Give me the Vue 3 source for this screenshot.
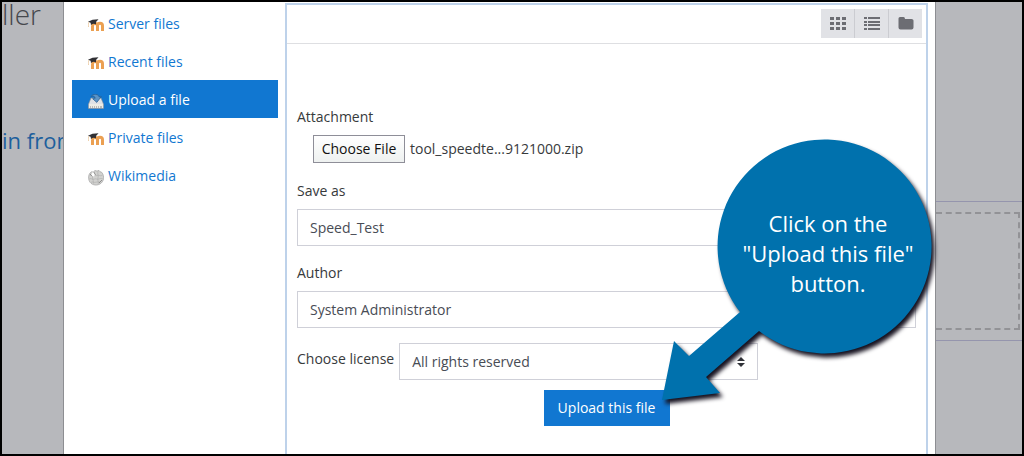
<script setup>
import { ref } from 'vue'

const repositories = [
  { name: 'Server files', icon: 'moodle' },
  { name: 'Recent files', icon: 'moodle' },
  { name: 'Upload a file', icon: 'upload', active: true },
  { name: 'Private files', icon: 'moodle' },
  { name: 'Wikimedia', icon: 'globe' }
]
const saveAs = ref('Speed_Test')
const author = ref('System Administrator')
const license = ref('all')
</script>

<template>
  <div class="screen">
    <div class="backdrop backdrop-left" aria-hidden="true">
      <div class="page-title"><span>ller</span></div>
      <div class="page-link"><span>in from</span></div>
    </div>

    <main class="dialog">
      <nav class="repos">
        <a v-for="r in repositories" :key="r.name" href="#" class="repo" :class="{ active: r.active }">
          <svg v-if="r.icon === 'moodle'" class="repo-icon" viewBox="0 0 16 16">
            <path d="M4.500 13V7.500M9.500 13V7.700c0-3-4.700-3-5-.2M9.500 13V7.700c0-3.200 5-3.200 5 0V13" fill="none" stroke="#eba052" stroke-width="3" />
            <path d="M0 3.700 4.500 1.700 10.500 1.300 8 4v2.500C6.200 5.500 4.600 5.700 3 7L2.600 4.700z" fill="#303034" />
            <path d="M.8 4.300C.2 6 0 7.500.4 9" fill="none" stroke="#e5b981" stroke-width=".8" />
          </svg>
          <svg v-else-if="r.icon === 'upload'" class="repo-icon" viewBox="0 0 16 16">
            <path d="M3 4h10l2.500 6v4.500H.5V10z" fill="#dfe2e6" stroke="#858c94" stroke-width=".6" />
            <path d="M.9 10h14.200v4H.9z" fill="#ecece6" />
            <path d="M2 13h1m1 0h1m1 0h1m1 0h1m1 0h1m1 0h2" stroke="#888" stroke-width="1" />
            <path d="M3 2.500C5-.6 10.300-.3 11.300 3l2-.4-4.500 5.800-4.200-3.700 2.600-.4C6.900 2.300 5.300 1.500 3 2.500z" fill="#5c94c6" stroke="#245a8d" stroke-width=".7" />
          </svg>
          <svg v-else class="repo-icon" viewBox="0 0 16 16">
            <path d="M2 3 4 1.500l1 .8L7 .5l2 .6 2-.7 1 1.300 1.700.6c3.200 4 2.300 9.300-1.800 11.700-4 2.200-9 .8-10.700-3.200C.1 8 .5 5.200 2 3z" fill="#d2d2d0" stroke="#a2a2a2" stroke-width=".7" />
            <path d="M2 5c2.500 1.700 3-.4 4.800.5s2.900-1 4.500-.1 2.400-.3 3.100.2M1.300 8.800c2.600-.8 2.800 1.200 5 .3s3 .9 5-.2 2.400.1 3.500-.2M3 12.300c2-1 3.200.6 5-.1s3 .5 4.800-.6M5 2.300c.3 3-1.300 3.700-.3 6.400s.2 3.600 1 5M10.200 1.300c-1.200 2.600.6 4-.2 6.500s.9 4 .2 6.300" fill="none" stroke="#a3a3a3" stroke-width=".5" />
            <path d="m5 1.500 2 3-1 2-3-1z" fill="#fff" />
            <path d="m5.800 2 1.700 3M2 4l2 2M11 13l3-3" stroke="#747474" stroke-width=".7" />
          </svg>
          <span>{{ r.name }}</span>
        </a>
      </nav>

      <section class="panel">
        <div class="toolbar">
          <div class="view-buttons">
            <button type="button" aria-label="Icons view">
              <svg viewBox="0 0 18 14"><path d="M1 1h4v3H1zM7 1h4v3H7zM13 1h4v3h-4zM1 6h4v3H1zM7 6h4v3H7zM13 6h4v3h-4zM1 11h4v3H1zM7 11h4v3H7zM13 11h4v3h-4z" /></svg>
            </button>
            <button type="button" aria-label="List view">
              <svg viewBox="0 0 18 14"><path d="M1 1h3v2H1zM5 1h12v2H5zM1 5h3v2H1zM5 5h12v2H5zM1 8h3v2H1zM5 8h12v2H5zM1 12h3v2H1zM5 12h12v2H5z" /></svg>
            </button>
            <button type="button" aria-label="Tree view">
              <svg viewBox="0 0 18 14"><path d="M1.500 2.500q0-1.500 1.500-1.500h3.500q1.500 0 1.500 2h6.500q2 0 2 1.500v7q0 2-2 2H3.500q-2 0-2-2z" /></svg>
            </button>
          </div>
        </div>

        <form class="upload-form" @submit.prevent>
          <label class="field-label" for="attachment">Attachment</label>
          <div class="file-row">
            <input id="attachment" class="file-input" type="file" />
            <label class="file-button" for="attachment">Choose File</label>
            <span>tool_speedte...9121000.zip</span>
          </div>

          <label class="field-label" for="save-as">Save as</label>
          <input id="save-as" v-model="saveAs" class="control" type="text" />

          <label class="field-label" for="author">Author</label>
          <input id="author" v-model="author" class="control" type="text" />

          <div class="license-row">
            <label for="license">Choose license</label>
            <div class="select-wrap">
              <select id="license" v-model="license" class="control">
                <option value="all">All rights reserved</option>
              </select>
              <svg class="select-arrows" viewBox="0 0 8 10"><path d="M0 4 4 0l4 4zM0 6h8l-4 4z" /></svg>
            </div>
          </div>

          <button class="submit" type="submit">Upload this file</button>
        </form>
      </section>

      <aside class="callout">
        <svg class="callout-shape" viewBox="0 0 300 300">
          <path d="M86 181 35 225 20 210 8 269 66 262 52 246 105 200A107 107 0 1 0 86 181z" />
        </svg>
        <p class="callout-text">Click on the<br />"Upload this file"<br />button.</p>
      </aside>
    </main>

    <div class="backdrop backdrop-right" aria-hidden="true">
      <div class="drop-area"><div class="drop-zone"></div></div>
    </div>
  </div>
</template>

<style>
body {
  margin: 0;
}
</style>

<style scoped>
* {
  box-sizing: border-box;
}

.screen {
  display: flex;
  min-height: 100vh;
  border: 2px solid #000;
  overflow: hidden;
  background: #b7b8bc;
  color: #373a3c;
  font-family: "Open Sans", "Noto Sans", sans-serif;
  font-size: 14px;
  line-height: 24px;
}

.backdrop {
  flex: none;
  overflow: hidden;
  white-space: nowrap;
}

.backdrop-left {
  width: 62px;
  border-right: 1px solid #8d8e92;
}

.backdrop-right {
  width: 87px;
  border-left: 1px solid #8d8e92;
}

.page-title {
  color: #45474c;
  font-size: 28px;
  font-weight: 300;
  line-height: 24px;
}

.page-link {
  margin-top: 100px;
  color: #1d5f9d;
  font-size: 22px;
  line-height: 28px;
}

.drop-area {
  margin-top: 199px;
  padding: 10px 2px 10px 0;
  border: solid #9595ad;
  border-width: 1px 0;
}

.drop-zone {
  height: 118px;
  border: 2px dashed #929296;
  border-left: 0;
}

.dialog {
  position: relative;
  display: flex;
  flex: 1;
  min-width: 0;
  background: #fff;
}

.repos {
  flex: none;
  width: 214px;
  padding: 2px 0 0 8px;
}

.repo {
  display: flex;
  align-items: center;
  gap: 4px;
  height: 38px;
  padding: 2px 0 0 16px;
  color: #1177d1;
  text-decoration: none;
}

.repo.active {
  background: #1177d1;
  color: #fff;
}

.repo-icon {
  width: 16px;
  height: 16px;
  margin-top: 4px;
}

.panel {
  flex: 1;
  min-width: 0;
  margin: 1px 7px 0 7px;
  border: solid #bed2ea;
  border-width: 2px 2px 0;
}

.toolbar {
  display: flex;
  justify-content: flex-end;
  height: 39px;
  padding: 4px 4px 5px;
  border-bottom: 1px solid #dedfe2;
}

.view-buttons {
  display: flex;
  gap: 1px;
  background: #cbccd1;
}

.view-buttons button {
  display: grid;
  place-items: center;
  width: 33px;
  padding: 0;
  border: 0;
  background: #e1e2e6;
}

.view-buttons svg {
  width: 18px;
  height: 14px;
  margin-bottom: 2px;
  fill: #6c6d73;
}

.upload-form {
  display: flex;
  flex-direction: column;
  padding: 61px 10px 0;
}

.file-row {
  display: flex;
  align-items: center;
  gap: 5px;
  margin: 6px 0 16px 16px;
}

.file-input {
  position: absolute;
  width: 1px;
  height: 1px;
  opacity: 0;
}

.file-button {
  width: 92px;
  height: 28px;
  border: 1px solid #8e8e98;
  background: linear-gradient(#fff, #eef1f0);
  color: #111;
  line-height: 26px;
  text-align: center;
}

.control {
  width: 100%;
  height: 37px;
  padding: 0 12px;
  border: 1px solid #cfd0d8;
  border-radius: 0;
  outline: 0;
  background: #fff;
  color: #484c55;
  font: inherit;
}

input.control {
  margin: 6px 0 15px;
}

.license-row {
  display: flex;
  gap: 5px;
  align-items: flex-start;
}

.license-row label {
  padding-top: 4px;
}

.select-wrap {
  position: relative;
  width: 359px;
}

.select-wrap .control {
  display: block;
  appearance: none;
}

.select-arrows {
  position: absolute;
  top: 14px;
  right: 13px;
  width: 8px;
  height: 10px;
  fill: #303238;
  pointer-events: none;
}

.submit {
  align-self: center;
  width: 126px;
  height: 36px;
  margin-top: 10px;
  padding: 0;
  border: 0;
  background: #1177d1;
  color: #fff;
  font: inherit;
}

.callout {
  position: absolute;
  top: 129px;
  right: -19px;
  width: 300px;
  height: 300px;
}

.callout-shape {
  width: 300px;
  height: 300px;
  overflow: visible;
  fill: #0071ad;
  filter: drop-shadow(3px 4px 2px #161220);
}

.callout-text {
  position: absolute;
  top: 77px;
  left: 67px;
  width: 214px;
  margin: 0;
  color: #fff;
  font-size: 22px;
  line-height: 30px;
  text-align: center;
}
</style>
